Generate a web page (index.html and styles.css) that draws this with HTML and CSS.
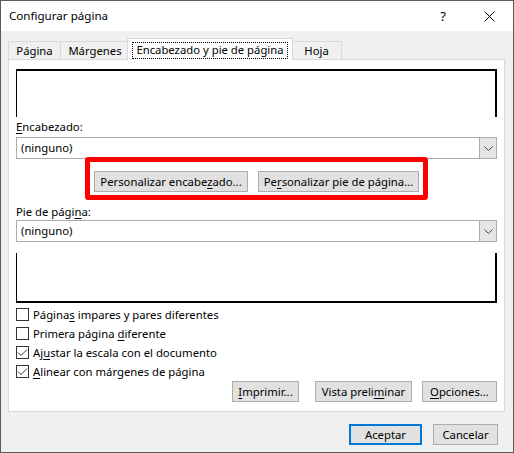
FILE: index.html
```html
<!DOCTYPE html>
<html lang="es">
  <head>
    <meta charset="UTF-8" />
    <meta name="viewport" content="width=device-width, initial-scale=1.0" />
    <title>Configurar página</title>
    <link rel="stylesheet" href="styles.css">
  </head>
  <body>
    <div class="window">
      <div class="titlebar">
        <span class="title">Configurar página</span>
        <span class="help">?</span>
        <span class="close">
          <svg width="11" height="11" viewBox="0 0 11 11">
            <path d="M0.5 0.5 L10.5 10.5 M10.5 0.5 L0.5 10.5" stroke="#000" stroke-width="1" fill="none" />
          </svg>
        </span>
      </div>

      <div class="content">
        <div class="tabs">
          <div class="tab">Página</div>
          <div class="tab">Márgenes</div>
          <div class="tab active"><span class="focus">Encabezado y pie de página</span></div>
          <div class="tab">Hoja</div>
        </div>

        <div class="panel">
          <div class="preview preview-header"></div>

          <div class="label"><u>E</u>ncabezado:</div>
          <div class="select">
            <span class="select-value">(ninguno)</span>
            <span class="select-arrow">
              <svg width="9" height="5" viewBox="0 0 9 5">
                <path d="M0.5 0.5 L4.5 4.5 L8.5 0.5" stroke="#444" stroke-width="1" fill="none" />
              </svg>
            </span>
          </div>

          <div class="custom-row">
            <button class="btn btn-custom-header">Personalizar encabe<u>z</u>ado...</button>
            <button class="btn btn-custom-footer">Pe<u>r</u>sonalizar pie de página...</button>
          </div>

          <div class="label label-footer">Pie de pági<u>n</u>a:</div>
          <div class="select">
            <span class="select-value">(ninguno)</span>
            <span class="select-arrow">
              <svg width="9" height="5" viewBox="0 0 9 5">
                <path d="M0.5 0.5 L4.5 4.5 L8.5 0.5" stroke="#444" stroke-width="1" fill="none" />
              </svg>
            </span>
          </div>

          <div class="preview preview-footer"></div>

          <div class="checks">
            <label class="check">
              <span class="box"></span>
              <span>Página<u>s</u> impares y pares diferentes</span>
            </label>
            <label class="check">
              <span class="box"></span>
              <span>Primera página <u>d</u>iferente</span>
            </label>
            <label class="check">
              <span class="box">
                <svg width="11" height="11" viewBox="0 0 11 11">
                  <path d="M1 5.5 L4 8.5 L10 2.5" stroke="#333" stroke-width="1" fill="none" />
                </svg>
              </span>
              <span>Aj<u>u</u>star la escala con el documento</span>
            </label>
            <label class="check">
              <span class="box">
                <svg width="11" height="11" viewBox="0 0 11 11">
                  <path d="M1 5.5 L4 8.5 L10 2.5" stroke="#333" stroke-width="1" fill="none" />
                </svg>
              </span>
              <span><u>A</u>linear con márgenes de página</span>
            </label>
          </div>

          <div class="panel-actions">
            <button class="btn btn-print"><u>I</u>mprimir...</button>
            <button class="btn btn-preview">Vista preli<u>m</u>inar</button>
            <button class="btn btn-options"><u>O</u>pciones...</button>
          </div>
        </div>

        <div class="dialog-actions">
          <button class="btn btn-ok">Aceptar</button>
          <button class="btn btn-cancel">Cancelar</button>
        </div>
      </div>
    </div>
  </body>
</html>
```

FILE: styles.css
```css
* {
  margin: 0;
  padding: 0;
  box-sizing: border-box;
}

body {
  font-family: "Noto Sans", "Open Sans", sans-serif;
  font-size: 11.3px;
  color: #000;
  background-color: #fff;
  white-space: nowrap;
}

u {
  text-decoration: underline;
  text-underline-offset: 2px;
}

.window {
  width: 514px;
  height: 453px;
  border: 1px solid #5a5a5a;
  background-color: #f0f0f0;
}

/* title bar */

.titlebar {
  display: flex;
  align-items: center;
  height: 30px;
  background-color: #fff;
  padding-left: 8px;
}

.title {
  flex: 1;
  font-size: 11.6px;
  line-height: 16px;
}

.help {
  width: 46px;
  text-align: center;
  font-size: 13px;
}

.close {
  width: 46px;
  display: flex;
  justify-content: center;
  margin-right: 1px;
}

/* tabs + panel */

.content {
  padding: 7px 8px 0 7px;
}

.tabs {
  display: flex;
  align-items: flex-end;
  height: 21px;
  position: relative;
  z-index: 1;
}

.tab {
  height: 18px;
  line-height: 17px;
  border: 1px solid #d9d9d9;
  border-bottom: none;
  margin-right: -1px;
  background-color: #f0f0f0;
  text-align: center;
}

.tab:nth-child(1) {
  width: 53px;
}

.tab:nth-child(2) {
  width: 70px;
}

.tab:nth-child(4) {
  width: 51px;
}

.tab.active {
  width: 166px;
  height: 22px;
  margin: 0 -2px -1px -2px;
  padding: 3px 4px 0;
  background-color: #fff;
  position: relative;
  z-index: 2;
}

.focus {
  display: block;
  border: 1px dotted #000;
  line-height: 14px;
  padding-bottom: 1px;
}

.panel {
  height: 353px;
  background-color: #fff;
  border: 1px solid #d9d9d9;
  padding: 9px 7px 0 7px;
}

.preview {
  height: 48px;
  border-color: #000;
  border-style: solid;
}

.preview-header {
  border-width: 2px 2px 0 1px;
  margin-bottom: 2px;
}

.preview-footer {
  height: 50px;
  border-width: 0 2px 2px 1px;
  margin-top: 11px;
}

.label {
  line-height: 16px;
  margin-bottom: 2px;
}

.label-footer {
  margin-top: 12px;
  margin-bottom: 0;
}

.select {
  display: flex;
  align-items: stretch;
  height: 22px;
  border: 1px solid #adadad;
  background-color: #fff;
}

.select-value {
  flex: 1;
  line-height: 20px;
  padding-left: 4px;
}

.select-arrow {
  width: 17px;
  display: flex;
  align-items: center;
  justify-content: center;
  background-color: #e5e5e5;
  border-left: 1px solid #adadad;
}

/* buttons */

.btn {
  font-family: inherit;
  font-size: 11.3px;
  color: #000;
  height: 21px;
  background-color: #e1e1e1;
  border: 1px solid #adadad;
  line-height: 17px;
  padding: 0;
  white-space: nowrap;
}

.custom-row {
  display: flex;
  justify-content: center;
  gap: 10px;
  margin-top: 12px;
  position: relative;
}

/* red highlight drawn over the two custom buttons */
.custom-row::before {
  content: "";
  position: absolute;
  top: -14px;
  bottom: -8px;
  left: 69px;
  right: 69px;
  border: 5px solid #f00;
  border-radius: 3px;
}

.btn-custom-header {
  width: 154px;
}

.btn-custom-footer {
  width: 161px;
}

.checks {
  margin-top: 2px;
}

.check {
  display: flex;
  align-items: center;
  height: 19px;
  gap: 4px;
}

.box {
  width: 13px;
  height: 13px;
  border: 1px solid #333;
  background-color: #fff;
  display: flex;
  align-items: center;
  justify-content: center;
}

.panel-actions {
  display: flex;
  justify-content: flex-end;
  margin-top: 0;
}

.btn-print {
  width: 67px;
  margin-right: 16px;
}

.btn-preview {
  width: 97px;
  margin-right: 10px;
}

.btn-options {
  width: 75px;
}

.dialog-actions {
  display: flex;
  justify-content: flex-end;
  gap: 11px;
  margin-top: 12px;
  padding-right: 7px;
}

.btn-ok {
  width: 73px;
  border: 2px solid #0078d7;
}

.btn-cancel {
  width: 65px;
}
```
